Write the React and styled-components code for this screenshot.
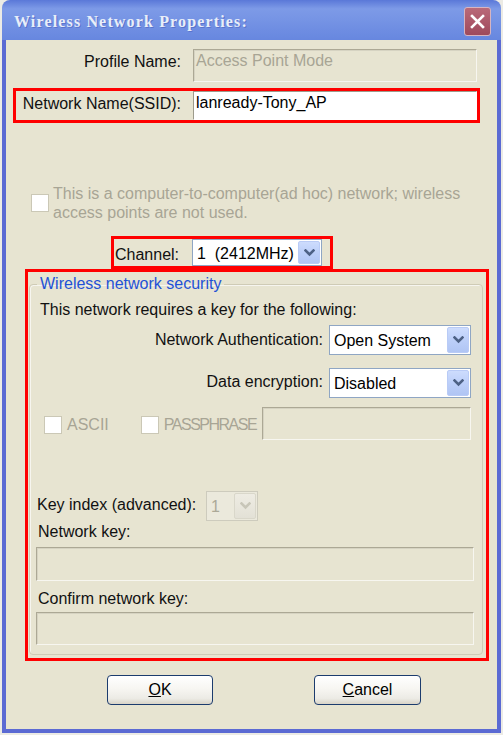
import React from 'react';
import styled, { createGlobalStyle } from 'styled-components';

const Global = createGlobalStyle`
  html, body { margin: 0; padding: 0; background: #ecebe5; }
  body { font-family: "Liberation Sans", Arial, sans-serif; font-size: 16px; color: #111; }
  #root { width: 503px; height: 735px; overflow: hidden; }
`;

const Window = styled.div`
  margin-left: 2px;
  width: 499px;
  height: 733px;
  display: flex;
  flex-direction: column;
`;

const TitleBar = styled.div`
  height: 40px;
  flex: none;
  display: flex;
  align-items: center;
  justify-content: space-between;
  padding: 0 10px 0 12px;
  border-radius: 8px 8px 0 0;
  background: linear-gradient(180deg, #5a78d8 0%, #7d9ae7 22%, #7795e5 45%, #6e8de2 75%, #6787df 100%);
`;

const Title = styled.span`
  font-family: "Liberation Serif", "DejaVu Serif", serif;
  font-weight: bold;
  font-size: 16px;
  letter-spacing: 1.15px;
  color: #e8eef9;
  text-shadow: 1px 1px 0 #5a74cc;
  margin-top: 3px;
`;

const CloseButton = styled.div`
  width: 27px;
  height: 29px;
  margin-top: 3px;
  box-sizing: border-box;
  border: 1px solid #d7b4c0;
  border-radius: 3px;
  background: linear-gradient(180deg, #b96a79 0%, #aa5668 60%, #9e4a5c 100%);
  display: flex;
  align-items: center;
  justify-content: center;
`;

const Frame = styled.div`
  flex: 1;
  display: flex;
  border: 4px solid #5b6ad3;
  border-top: 0;
`;

const Body = styled.div`
  flex: 1;
  background: #e7e4d1;
  display: flex;
  flex-direction: column;
  align-items: flex-start;
  padding-top: 9px;
`;

const FieldGrid = styled.div`
  display: grid;
  grid-template-columns: 165px 284px;
  column-gap: 12px;
  align-items: start;
  margin-left: ${p => p.$indent || 0}px;
`;

const Label = styled.div`
  text-align: ${p => (p.$right ? 'right' : 'left')};
  line-height: 18px;
  padding-top: ${p => p.$top || 0}px;
  color: ${p => (p.$disabled ? '#a8a595' : '#111')};
  letter-spacing: ${p => p.$tight || 0}px;
  white-space: nowrap;
`;

const ChannelLabel = styled(Label)`
  width: 78px;
  box-sizing: border-box;
  padding-left: 1px;
`;

const TextBox = styled.div`
  box-sizing: border-box;
  height: ${p => p.$h}px;
  margin-top: ${p => p.$mt || 0}px;
  flex: ${p => (p.$grow ? 1 : 'none')};
  border: 1px solid;
  border-color: ${p => (p.$white ? '#9d9b8c #fff #fff #9d9b8c' : '#aca895 #f7f6f0 #f7f6f0 #aca895')};
  box-shadow: ${p => (p.$white ? 'none' : 'inset 1px 1px 0 #d6d3c2')};
  background: ${p => (p.$white ? '#fff' : 'transparent')};
  color: ${p => (p.$white ? '#000' : '#a8a595')};
  padding: 2px 0 0 2px;
  line-height: 18px;
  white-space: nowrap;
`;

const RedFrame = styled.div`
  box-sizing: border-box;
  border: 3px solid #ff0000;
`;

const SsidBox = styled(RedFrame)`
  width: 467px;
  margin: 6px 0 0 7px;
`;

const AdhocRow = styled.div`
  display: flex;
  align-items: center;
  gap: 4px;
  margin: 61px 0 0 25px;
  color: #a8a595;
  line-height: 19px;
`;

const CheckBox = styled.div`
  width: 18px;
  height: 18px;
  box-sizing: border-box;
  flex: none;
  border: 1px solid #cbc8b6;
  background: #fff;
`;

const ChannelBox = styled(RedFrame)`
  width: 222px;
  margin: 14px 0 0 105px;
  display: flex;
  align-items: flex-start;
`;

const Combo = styled.div`
  box-sizing: border-box;
  display: flex;
  align-items: stretch;
  flex: none;
  width: ${p => p.$w}px;
  height: ${p => p.$h}px;
  padding: 1px;
  border: 1px solid ${p => (p.$disabled ? '#cdcbbd' : '#8fa6c4')};
  background: ${p => (p.$disabled ? '#ebe9dc' : '#fff')};
`;

const ComboText = styled.div`
  flex: 1;
  display: flex;
  align-items: center;
  padding: 2px 0 0 3px;
  color: ${p => (p.$disabled ? '#aca998' : '#000')};
  white-space: pre;
`;

const ComboButton = styled.div`
  width: 22px;
  flex: none;
  box-sizing: border-box;
  border-radius: 2px;
  border: 1px solid ${p => (p.$disabled ? '#d9d7ca' : '#b9cbf6')};
  background: ${p =>
    p.$disabled
      ? 'linear-gradient(180deg, #eeece3, #e3e1d6)'
      : 'linear-gradient(180deg, #cddcfd 0%, #bccff9 50%, #b0c5f4 100%)'};
  display: flex;
  align-items: center;
  justify-content: center;
`;

const SecurityBox = styled(RedFrame)`
  width: 464px;
  margin-left: 19px;
  padding: 0 3px 3px 1px;
`;

const Group = styled.fieldset`
  margin: 3px 0 0 0;
  padding: 0 8px 9px 6px;
  border: 1px solid #cfcbb6;
  border-radius: 4px;
  box-shadow: inset 1px 1px 0 #f6f5ef;
  min-width: 0;
`;

const Legend = styled.legend`
  margin-left: 1px;
  padding: 0 3px;
  line-height: 18px;
  color: #1f52d6;
`;

const GroupBody = styled.div`
  display: flex;
  flex-direction: column;
  align-items: stretch;
`;

const Intro = styled.div`
  margin: 8px 0 0 4px;
  line-height: 18px;
`;

const SelectRow = styled.div`
  display: flex;
  justify-content: flex-end;
  align-items: flex-start;
  gap: 6px;
  padding-right: 3px;
  margin-top: ${p => p.$mt}px;
`;

const KeyFormatRow = styled.div`
  display: flex;
  align-items: center;
  margin-top: 9px;
  padding-left: 8px;
  padding-right: 3px;
  height: 33px;
`;

const CheckItem = styled.div`
  display: flex;
  align-items: center;
  gap: 5px;
  margin-right: ${p => p.$mr || 0}px;
  margin-top: 3px;
`;

const KeyIndexRow = styled.div`
  display: flex;
  align-items: flex-start;
  margin-top: 51px;
  padding-left: 1px;
`;

const KeyIndexLabel = styled(Label)`
  width: 169px;
  padding-top: 5px;
`;

const FieldCaption = styled.div`
  margin: ${p => p.$mt}px 0 0 2px;
  line-height: 18px;
`;

const ButtonRow = styled.div`
  display: flex;
  gap: 101px;
  margin: 14px 0 0 101px;
`;

const PushButton = styled.button`
  width: ${p => p.$w}px;
  height: 30px;
  padding: 0;
  border: 1px solid #1c3c6e;
  border-radius: 4px;
  background: linear-gradient(180deg, #ffffff 0%, #f7f6f2 45%, #ecebe5 80%, #d9d4c8 100%);
  font-family: "Liberation Sans", Arial, sans-serif;
  font-size: 16px;
  color: #000;
`;

const Chevron = ({ disabled }) => (
  <svg width="11" height="8" viewBox="0 0 11 8">
    <path d="M1.5 1.5 L5.5 5.5 L9.5 1.5" fill="none" stroke={disabled ? '#c8c6b8' : '#4d6185'} strokeWidth="2.6" strokeLinecap="square" />
  </svg>
);

const Select = ({ w, h, value, disabled }) => (
  <Combo $w={w} $h={h} $disabled={disabled}>
    <ComboText $disabled={disabled}>{value}</ComboText>
    <ComboButton $disabled={disabled}>
      <Chevron disabled={disabled} />
    </ComboButton>
  </Combo>
);

export default function App() {
  return (
    <>
      <Global />
      <Window>
        <TitleBar>
          <Title>Wireless Network Properties:</Title>
          <CloseButton>
            <svg width="15" height="15" viewBox="0 0 15 15">
              <path d="M2 2 L13 13 M13 2 L2 13" stroke="#fff" strokeWidth="2.6" strokeLinecap="square" />
            </svg>
          </CloseButton>
        </TitleBar>
        <Frame>
          <Body>
            <FieldGrid $indent={10}>
              <Label $right $top={4}>Profile Name:</Label>
              <TextBox $h={33}>Access Point Mode</TextBox>
            </FieldGrid>

            <SsidBox>
              <FieldGrid>
                <Label $right $top={4}>Network Name(SSID):</Label>
                <TextBox $h={29} $white>lanready-Tony_AP</TextBox>
              </FieldGrid>
            </SsidBox>

            <AdhocRow>
              <CheckBox />
              <div>
                This is a computer-to-computer(ad hoc) network; wireless
                <br />
                access points are not used.
              </div>
            </AdhocRow>

            <ChannelBox>
              <ChannelLabel $top={7}>Channel:</ChannelLabel>
              <Select w={130} h={27} value="1  (2412MHz)" />
            </ChannelBox>

            <SecurityBox>
              <Group>
                <Legend>Wireless network security</Legend>
                <GroupBody>
                  <Intro>This network requires a key for the following:</Intro>

                  <SelectRow $mt={6}>
                    <Label $top={6}>Network Authentication:</Label>
                    <Select w={142} h={30} value="Open System" />
                  </SelectRow>

                  <SelectRow $mt={13}>
                    <Label $top={5}>Data encryption:</Label>
                    <Select w={142} h={30} value="Disabled" />
                  </SelectRow>

                  <KeyFormatRow>
                    <CheckItem $mr={32}>
                      <CheckBox />
                      <Label $disabled>ASCII</Label>
                    </CheckItem>
                    <CheckItem $mr={6}>
                      <CheckBox />
                      <Label $disabled $tight={-1.5}>PASSPHRASE</Label>
                    </CheckItem>
                    <TextBox $h={33} $grow />
                  </KeyFormatRow>

                  <KeyIndexRow>
                    <KeyIndexLabel>Key index (advanced):</KeyIndexLabel>
                    <Select w={52} h={30} value="1" disabled />
                  </KeyIndexRow>

                  <FieldCaption $mt={2}>Network key:</FieldCaption>
                  <TextBox $h={34} $mt={6} />

                  <FieldCaption $mt={9}>Confirm network key:</FieldCaption>
                  <TextBox $h={33} $mt={4} />
                </GroupBody>
              </Group>
            </SecurityBox>

            <ButtonRow>
              <PushButton $w={106}><u>O</u>K</PushButton>
              <PushButton $w={107}><u>C</u>ancel</PushButton>
            </ButtonRow>
          </Body>
        </Frame>
      </Window>
    </>
  );
}
